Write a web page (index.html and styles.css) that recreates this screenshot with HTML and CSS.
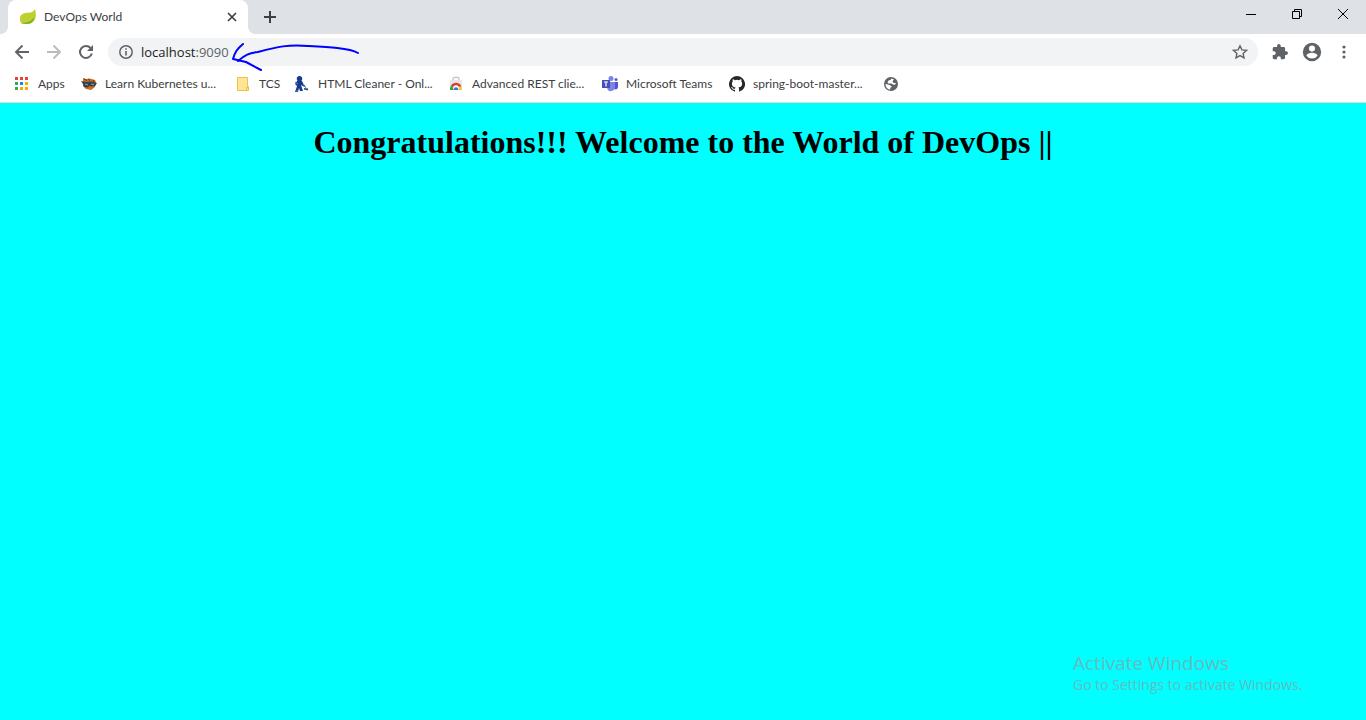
FILE: index.html
```html
<!DOCTYPE html>
<html lang="en">
<head>
<meta charset="utf-8">
<title>DevOps World</title>
<link rel="stylesheet" href="styles.css">
</head>
<body>
<div class="browser">
  <header class="tabstrip">
    <div class="tab">
      <svg class="icon" viewBox="0 0 16 16"><path d="M15 0c1.500 5 1.200 10-2 13-3 2.500-7.500 2.500-10.500 1.500C.5 14 0 12 0 9.500 0 5 4 4 8 3.800 11 3.600 13.500 3 15 0z" fill="#bfd02b"/><path d="M.5 12.500C6 12.500 11.500 11 14.500 6.500c.2 3-1 6-3.500 7.500-3 1.500-7 1.200-9.500.2z" fill="#83b81a"/><path d="M1 13c5.500.2 10-1.500 13-5.500" fill="none" stroke="#e3ea91" stroke-width=".8"/></svg>
      <span class="tab-title">DevOps World</span>
      <button class="tab-close" aria-label="Close tab"><svg width="10" height="10" viewBox="0 0 10 10"><path d="M1 1l8 8M9 1L1 9" stroke="#3c4043" stroke-width="1.700"/></svg></button>
    </div>
    <button class="new-tab" aria-label="New tab"><svg width="12" height="12" viewBox="0 0 12 12"><path d="M6 0v12M0 6h12" stroke="#3c4043" stroke-width="2"/></svg></button>
    <div class="window-controls">
      <button aria-label="Minimize"><svg width="10" height="10" viewBox="0 0 10 10"><path d="M0 5.500h10" stroke="#000"/></svg></button>
      <button aria-label="Restore"><svg width="10" height="10" viewBox="0 0 10 10"><path d="M.5 2.500h7v7h-7zM2.500 2.500v-2h7v7h-2" fill="none" stroke="#000"/></svg></button>
      <button aria-label="Close"><svg width="10" height="10" viewBox="0 0 10 10"><path d="M0 0l10 10M10 0L0 10" stroke="#000"/></svg></button>
    </div>
  </header>
  <div class="toolbar">
    <nav class="history">
      <button aria-label="Back"><svg width="16" height="16" viewBox="0 0 16 16"><path d="M15 8H2M8.500 1.500L2 8l6.500 6.500" fill="none" stroke="#5f6368" stroke-width="1.900"/></svg></button>
      <button aria-label="Forward"><svg width="16" height="16" viewBox="0 0 16 16"><path d="M1 8h13M7.500 1.500L14 8l-6.500 6.500" fill="none" stroke="#b9bbbe" stroke-width="1.900"/></svg></button>
      <button aria-label="Reload"><svg width="16" height="16" viewBox="0 0 16 16"><path d="M13.800 9.500A6 6 0 1 1 12.500 4" fill="none" stroke="#5f6368" stroke-width="2"/><path d="M15 1v6H9z" fill="#5f6368"/></svg></button>
    </nav>
    <div class="omnibox">
      <svg width="14" height="14" viewBox="0 0 14 14"><circle cx="7" cy="7" r="6.200" fill="none" stroke="#5f6368" stroke-width="1.500"/><path d="M7 6v4.500M7 3.200v1.600" stroke="#5f6368" stroke-width="1.600"/></svg>
      <span class="address" role="textbox" aria-label="Address" tabindex="0">localhost<span class="port">:9090</span></span>
      <button class="star" aria-label="Bookmark this page"><svg width="16" height="16" viewBox="0 0 16 16"><path d="M8 1.800l1.900 4.100 4.500.5-3.300 3 .9 4.500-4-2.300-4 2.300.9-4.500-3.300-3 4.500-.5z" fill="none" stroke="#5f6368" stroke-width="1.400"/></svg></button>
    </div>
    <div class="actions">
      <button aria-label="Extensions"><svg width="16" height="16" viewBox="1 1 22 22"><path d="M20.500 11H19V7a2 2 0 0 0-2-2h-4V3.500a2.500 2.500 0 0 0-5 0V5H4a2 2 0 0 0-2 2v3.800h1.500a2.700 2.700 0 0 1 0 5.400H2V20a2 2 0 0 0 2 2h3.800v-1.500a2.700 2.700 0 0 1 5.400 0V22H17a2 2 0 0 0 2-2v-4h1.500a2.500 2.500 0 0 0 0-5z" fill="#5f6368"/></svg></button>
      <button aria-label="Profile"><svg width="22" height="22" viewBox="0 0 24 24"><path fill="#5f6368" d="M12 2a10 10 0 1 0 0 20 10 10 0 0 0 0-20zm0 3a3.300 3.300 0 1 1 0 6.600A3.300 3.300 0 0 1 12 5zm0 14.200a7.200 7.200 0 0 1-6-3.200c0-2 4-3.100 6-3.100s6 1.100 6 3.100a7.200 7.200 0 0 1-6 3.200z"/></svg></button>
      <button aria-label="Menu"><svg width="16" height="16" viewBox="0 0 16 16" fill="#5f6368"><circle cx="8" cy="3" r="1.600"/><circle cx="8" cy="8" r="1.600"/><circle cx="8" cy="13" r="1.600"/></svg></button>
    </div>
  </div>
  <nav class="bookmarks" aria-label="Bookmarks">
    <a href="#apps"><svg class="icon" viewBox="0 0 16 16"><path fill="#ea4335" d="M1 1h3v3H1zM6 1h3v3H6zM11 1h3v3h-3z"/><path fill="#34a853" d="M1 6h3v3H1zM1 11h3v3H1z"/><path fill="#1a85f5" d="M6 6h3v3H6z"/><path fill="#f9ab00" d="M11 6h3v3h-3zM6 11h3v3H6zM11 11h3v3h-3z"/></svg>Apps</a>
    <a href="#kubernetes"><svg class="icon" viewBox="0 0 16 16"><path d="M2 2l3 1 4-.5L14 4l1 2-1 5-4 3-5-1-3-3z" fill="#c46d2d"/><path d="M0 5l5 1 5-.5L16 7l-2 3-3 .5L8 10l-1 1.500L3 11 2 8z" fill="#34404b"/><path d="M3 3l3 1.500M7 3l2 1.500M12 4l1 2" stroke="#633713"/><path d="M4 8l3 1M10 8l3 .5" stroke="#9ba9ad"/></svg>Learn Kubernetes u...</a>
    <a href="#tcs"><svg class="icon" viewBox="0 0 16 16"><path d="M2.500 1.500h10v9h1v4h-11z" fill="#ffe594" stroke="#e8c34d"/><path d="M11.500 14v-2.500h2" fill="none" stroke="#e8c34d"/></svg>TCS</a>
    <a href="#cleaner"><svg class="icon" viewBox="0 0 16 16"><circle cx="5.500" cy="2.800" r="2.700" fill="#173a91"/><path d="M3 5h5l1.500 3 2 2-1 1L7 9l1 3 1 3H6l-1-3-1 4H1l2-6-2-2z" fill="#173a91"/><path d="M1 6l3 2M9 8l3 4M2 15h2" stroke="#6583c6"/><path d="M10 12l4 .5v2l-4-1z" fill="#334967"/></svg>HTML Cleaner - Onl...</a>
    <a href="#rest"><svg class="icon" viewBox="0 0 16 16"><path d="M5 4.500V2.500C5 .8 11 .8 11 2.500v2" fill="none" stroke="#c4c4c4" stroke-width="1.300"/><path d="M2 4h12v10H2z" fill="#e6e6e6"/><path d="M3 9.500a6 6 0 0 1 10 0V11H8L5 12z" fill="#df3c30"/><path d="M3 9.500L6.500 14H2v-2z" fill="#2ca24b"/><path d="M13.500 10.500L14 14H8.500l2-3.500z" fill="#f9c52d"/><circle cx="8" cy="12" r="2.800" fill="#fff"/><path d="M5.900 14a2.200 2.200 0 1 1 4.200 0z" fill="#3976df"/></svg>Advanced REST clie...</a>
    <a href="#teams"><svg class="icon" viewBox="0 0 16 16"><circle cx="9" cy="2.500" r="2.500" fill="#7b83eb"/><circle cx="14" cy="3.500" r="1.500" fill="#5059c9"/><path d="M11 6h5v5c0 3-4 3-5 1z" fill="#5059c9"/><path d="M5 6h8v5c0 5-8 6-8 0z" fill="#7b83eb"/><path d="M0 4h8v8H0z" fill="#464eb8"/><path d="M2 6h4M4 6v4.500" stroke="#fff" stroke-width="1.200"/></svg>Microsoft Teams</a>
    <a href="#spring"><svg class="icon" viewBox="0 0 16 16"><path fill="#24292e" d="M8 0a8 8 0 0 0-2.530 15.590c.4.070.55-.17.55-.38v-1.490c-2.010.37-2.530-.49-2.690-.94-.09-.23-.48-.94-.82-1.130-.28-.15-.68-.52-.01-.53.63-.01 1.080.58 1.230.82.720 1.210 1.870.87 2.330.66.070-.52.280-.87.510-1.070-1.780-.2-3.640-.89-3.640-3.950 0-.87.310-1.590.82-2.150-.08-.2-.36-1.020.08-2.120 0 0 .67-.21 2.200.82a7.400 7.400 0 0 1 4 0c1.530-1.040 2.200-.82 2.200-.82.44 1.100.16 1.920.08 2.120.51.560.82 1.270.82 2.150 0 3.070-1.870 3.750-3.650 3.950.29.250.54.730.54 1.480v2.200c0 .21.150.46.550.38A8 8 0 0 0 8 0z"/></svg>spring-boot-master...</a>
    <a href="#site" aria-label="Website"><svg class="icon" viewBox="0 0 16 16"><circle cx="8" cy="8" r="7" fill="#5f6368"/><path d="M8.500 2.500l-1 1.500-2 .5-1 2 1 1h3l1.500 1 2 .2 1-1.700h-2L9.500 6l.5-1.500 1-1z" fill="#fff"/><path d="M2.500 8l2.500.5 2.500 1L9 11l-1.500.5-.5 2.200L5 13 3 11z" fill="#fff"/></svg></a>
  </nav>
  <main class="page">
    <h1>Congratulations!!! Welcome to the World of DevOps ||</h1>
  </main>
  <svg class="ink" width="130" height="32" viewBox="0 0 130 32"><path d="M12 2C6 7 4 10 2 17l13 3 15 8M7 19C14 13 18 11 27 10 46 5 58 2 77 4c20 1 41 2 50 7" fill="none" stroke="#00f" stroke-width="2" stroke-linecap="round" stroke-linejoin="round"/></svg>
  <aside class="watermark">
    <p class="watermark-title">Activate Windows</p>
    <p class="watermark-text">Go to Settings to activate Windows.</p>
  </aside>
</div>
</body>
</html>
```
FILE: styles.css
```css
* { box-sizing: border-box; }
body { margin: 0; font: 12px/16px Lato, "Open Sans", sans-serif; color: #3c4043; }
button { display: flex; align-items: center; justify-content: center; padding: 0; border: 0; background: none; }
svg { flex: none; }
.browser { position: relative; display: flex; flex-direction: column; min-height: 100vh; background: #fff; }
.icon { width: 16px; height: 16px; }

.tabstrip { display: flex; height: 34px; padding-left: 8px; background: #dee1e6; }
.tab { position: relative; display: flex; align-items: center; gap: 8px; width: 240px; padding: 0 8px 0 12px; border-radius: 8px 8px 0 0; background: #fff; }
.tab::before, .tab::after { content: ""; position: absolute; bottom: 0; width: 8px; height: 8px; }
.tab::before { left: -8px; background: radial-gradient(circle at 0 0, #dee1e6 8px, #fff 8px); }
.tab::after { right: -8px; background: radial-gradient(circle at 100% 0, #dee1e6 8px, #fff 8px); }
.tab-title { flex: 1; }
.tab-close { width: 16px; height: 16px; }
.new-tab { width: 28px; margin-left: 8px; }
.window-controls { display: flex; margin-left: auto; height: 28px; }
.window-controls button { width: 46px; }

.toolbar { display: flex; align-items: center; height: 36px; padding: 0 8px; }
.history { display: flex; gap: 4px; }
.history button { width: 28px; height: 28px; }
.omnibox { display: flex; flex: 1; align-items: center; gap: 8px; height: 28px; margin: 0 8px; padding: 0 8px 0 11px; border-radius: 14px; background: #f1f3f4; }
.address { flex: 1; font-family: "Open Sans", sans-serif; font-size: 13px; color: #202124; }
.port { color: #5f6368; }
.star { width: 20px; height: 20px; }
.actions { display: flex; gap: 4px; }
.actions button { width: 28px; height: 28px; }

.bookmarks { display: grid; grid-template-columns: 67px 154px 59px 154px 154px 127px 154px 16px; height: 33px; padding: 0 14px 4px; border-bottom: 1px solid #dadce0; }
.bookmarks a { display: flex; align-items: center; gap: 8px; color: #3c4043; text-decoration: none; white-space: nowrap; }

.page { flex: 1; padding: 21px 8px; background: #0ff; }
.page h1 { margin: 0; font: bold 32px/37px "Liberation Serif", serif; color: #000; text-align: center; }

.ink { position: absolute; left: 231px; top: 42px; }
.watermark { position: absolute; right: 58px; bottom: 25px; width: 235px; color: #63bcc0; font-family: "Open Sans", sans-serif; white-space: nowrap; }
.watermark p { margin: 0; }
.watermark-title { font-size: 19px; line-height: 24px; }
.watermark-text { font-size: 14px; line-height: 20px; }
```
